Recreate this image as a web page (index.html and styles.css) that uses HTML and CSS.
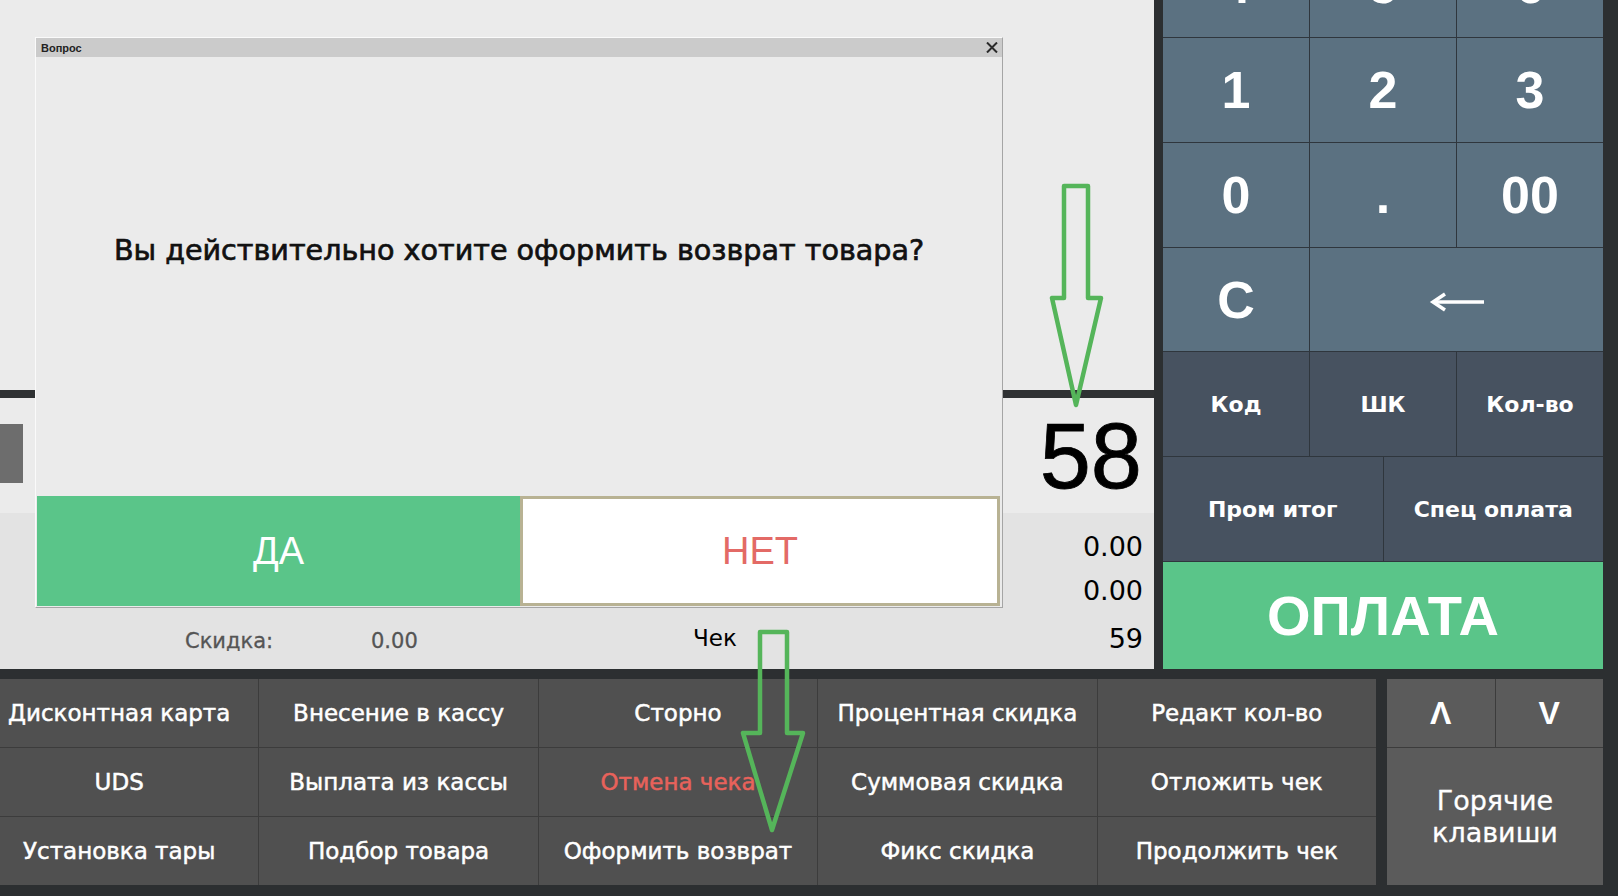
FILE: index.html
```html
<!DOCTYPE html>
<html lang="ru">
<head>
  <meta charset="UTF-8">
  <title>Касса</title>
  <link rel="stylesheet" href="styles.css">
</head>
<body>
  <div class="screen">
    <div class="top">
      <section class="receipt">
        <div class="items"></div>
        <div class="divider"></div>
        <div class="total-line">
          <div class="scroll-thumb"></div>
          <div class="total">58</div>
        </div>
        <div class="summary">
          <div class="sum-row">0.00</div>
          <div class="sum-row">0.00</div>
          <div class="sum-row info">
            <span class="info-label">Скидка:</span>
            <span class="info-value">0.00</span>
            <span class="check">Чек</span>
            <span class="check-no">59</span>
          </div>
        </div>
      </section>

      <section class="keypad">
        <div class="keys">
          <div class="key">4</div>
          <div class="key">5</div>
          <div class="key">6</div>
          <div class="key">1</div>
          <div class="key">2</div>
          <div class="key">3</div>
          <div class="key">0</div>
          <div class="key">.</div>
          <div class="key">00</div>
          <div class="key">C</div>
          <div class="key wide back">
            <svg width="56" height="20" viewBox="0 0 56 20">
              <path d="M4 10 H55" stroke="#fff" stroke-width="3.5"/>
              <path d="M16 2 L4 10 L16 18" fill="none" stroke="#fff" stroke-width="3.5"/>
            </svg>
          </div>
          <div class="key mode">Код</div>
          <div class="key mode">ШК</div>
          <div class="key mode">Кол-во</div>
          <div class="key mode half">Пром итог</div>
          <div class="key mode half">Спец оплата</div>
          <div class="key pay">ОПЛАТА</div>
        </div>
      </section>
    </div>

    <div class="bottom">
      <div class="functions">
        <div class="fn">Дисконтная карта</div>
        <div class="fn">Внесение в кассу</div>
        <div class="fn">Сторно</div>
        <div class="fn">Процентная скидка</div>
        <div class="fn">Редакт кол-во</div>
        <div class="fn">UDS</div>
        <div class="fn">Выплата из кассы</div>
        <div class="fn danger">Отмена чека</div>
        <div class="fn">Суммовая скидка</div>
        <div class="fn">Отложить чек</div>
        <div class="fn">Установка тары</div>
        <div class="fn">Подбор товара</div>
        <div class="fn">Оформить возврат</div>
        <div class="fn">Фикс скидка</div>
        <div class="fn">Продолжить чек</div>
      </div>
      <div class="nav">
        <div class="nav-key">&Lambda;</div>
        <div class="nav-key">V</div>
        <div class="nav-key hotkeys">Горячие<br>клавиши</div>
      </div>
    </div>

    <!-- confirmation window -->
    <div class="dialog">
      <div class="dialog-title">
        <span>Вопрос</span>
        <svg class="close" width="12" height="11" viewBox="0 0 12 11">
          <path d="M1 0.5 L11 10.5 M11 0.5 L1 10.5" stroke="#2a2a2a" stroke-width="2"/>
        </svg>
      </div>
      <div class="dialog-body">Вы действительно хотите оформить возврат товара?</div>
      <div class="dialog-buttons">
        <div class="btn-yes">ДА</div>
        <div class="btn-no">НЕТ</div>
      </div>
    </div>

    <!-- hint arrows -->
    <svg class="marks" width="1618" height="896" viewBox="0 0 1618 896">
      <path d="M1064 186 H1088 V298 H1101 L1076 405 L1052 298 H1064 Z" fill="none" stroke="#55b55a" stroke-width="4.5" stroke-linejoin="round"/>
      <path d="M760 632 H787 V733 H803 L772 830 L743 733 H760 Z" fill="none" stroke="#55b55a" stroke-width="4.5" stroke-linejoin="round"/>
    </svg>
  </div>
</body>
</html>
```

FILE: styles.css
```css
body {
  margin: 0;
  background-color: #2c2f31;
  font-family: "DejaVu Sans", sans-serif;
  overflow: hidden;
}

.screen {
  position: relative;
  width: 1618px;
  height: 896px;
  overflow: hidden;
}

/* upper part: receipt + keypad */
.top {
  display: flex;
  height: 669px;
}

.receipt {
  width: 1154px;
  display: flex;
  flex-direction: column;
  background-color: #ebebeb;
}

.items {
  height: 390px;
}

.divider {
  height: 8px;
  background-color: #2f3133;
}

.total-line {
  height: 115px;
  display: flex;
  justify-content: space-between;
  align-items: center;
}

.scroll-thumb {
  width: 23px;
  height: 59px;
  align-self: flex-start;
  margin-top: 26px;
  background-color: #6d6d6d;
}

.total {
  font-family: "Liberation Sans", Arial, sans-serif;
  font-size: 92px;
  line-height: 1;
  padding-right: 12px;
  color: #000;
  -webkit-text-stroke: 0.8px #000;
}

.summary {
  flex: 1;
  background-color: #e3e3e3;
  padding: 11px 11px 0 0;
}

.sum-row {
  height: 44px;
  display: flex;
  align-items: center;
  justify-content: flex-end;
  font-size: 27px;
  color: #000;
}

.sum-row.info {
  height: 52px;
  justify-content: flex-start;
  padding-left: 185px;
}

.info-label,
.info-value {
  color: #555;
  font-size: 21px;
  padding-top: 5px;
  -webkit-text-stroke: 0.3px #555;
}

.info-label {
  width: 186px;
}

.info-value {
  width: 322px;
}

.check {
  font-size: 23px;
  flex: 1;
}

.check-no {
  font-size: 27px;
}

/* keypad */
.keypad {
  width: 440px;
  margin-left: 9px;
  overflow: hidden;
  background-color: #2f363d;
}

.keys {
  margin-top: -67px;
  display: grid;
  grid-template-columns: repeat(6, 1fr);
  grid-template-rows: 104px 104px 104px 103px 104px 104px 107px;
  gap: 1px;
}

.key {
  grid-column: span 2;
  display: flex;
  align-items: center;
  justify-content: center;
  background-color: #5b7181;
  color: #fff;
  font-family: "Liberation Sans", Arial, sans-serif;
  font-weight: bold;
  font-size: 52px;
}

.key.wide {
  grid-column: span 4;
}

.key.back svg {
  margin-top: 5px;
}

.key.mode {
  background-color: #475260;
  font-family: "DejaVu Sans", sans-serif;
  font-size: 22px;
}

.key.half {
  grid-column: span 3;
}

.key.pay {
  grid-column: span 6;
  background-color: #5ac589;
  font-size: 56px;
}

/* lower function buttons */
.bottom {
  display: flex;
  gap: 11px;
  padding: 10px 15px 11px 0;
}

.functions {
  flex: 1;
  margin-left: -20px;
  display: grid;
  grid-template-columns: repeat(5, 1fr);
  grid-template-rows: repeat(3, 1fr);
  gap: 1px;
  background-color: #3c3c3c;
}

.fn {
  display: flex;
  align-items: center;
  justify-content: center;
  height: 68px;
  background-color: #505050;
  color: #fff;
  font-size: 23px;
  -webkit-text-stroke: 0.5px #fff;
  white-space: nowrap;
}

.fn.danger {
  color: #e8625b;
  -webkit-text-stroke-color: #e8625b;
}

.nav {
  width: 216px;
  display: grid;
  grid-template-columns: 1fr 1fr;
  grid-template-rows: 68px 1fr;
  gap: 1px;
  background-color: #3c3c3c;
}

.nav-key {
  display: flex;
  align-items: center;
  justify-content: center;
  background-color: #5b5b5b;
  color: #fff;
  font-family: "Liberation Sans", Arial, sans-serif;
  font-weight: bold;
  font-size: 32px;
}

.nav-key.hotkeys {
  grid-column: span 2;
  text-align: center;
  font-family: "DejaVu Sans", sans-serif;
  font-weight: normal;
  font-size: 27px;
  line-height: 32px;
  -webkit-text-stroke: 0.3px #fff;
}

/* modal window */
.dialog {
  position: absolute;
  left: 35px;
  top: 37px;
  width: 966px;
  height: 569px;
  display: flex;
  flex-direction: column;
  background-color: #ebebeb;
  border: 1px solid #a5a5a5;
  border-top-color: #fafafa;
  border-left-color: #fafafa;
}

.dialog-title {
  height: 19px;
  display: flex;
  align-items: center;
  justify-content: space-between;
  padding: 0 4px 0 5px;
  background-color: #cbcbcb;
  font-family: "Liberation Sans", Arial, sans-serif;
  font-weight: bold;
  font-size: 11px;
  color: #222;
}

.dialog-body {
  flex: 1;
  padding-top: 176px;
  text-align: center;
  font-size: 28.6px;
  line-height: 34px;
  color: #111;
  -webkit-text-stroke: 0.7px #111;
}

.dialog-buttons {
  display: flex;
  height: 110px;
  margin: 0 2px 1px 1px;
}

.btn-yes,
.btn-no {
  display: flex;
  align-items: center;
  justify-content: center;
  font-family: "Liberation Sans", Arial, sans-serif;
  font-size: 38px;
}

.btn-yes {
  width: 483px;
  background-color: #5ac589;
  color: #fff;
}

.btn-no {
  flex: 1;
  background-color: #fff;
  border: 3px solid #b8b293;
  color: #e36a66;
}

.marks {
  position: absolute;
  left: 0;
  top: 0;
  pointer-events: none;
}
```
